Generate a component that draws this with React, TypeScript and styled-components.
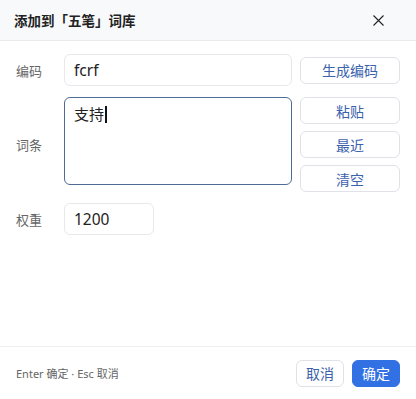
import React from "react";
import styled, { createGlobalStyle } from "styled-components";

const Global = createGlobalStyle`
  html, body { margin: 0; padding: 0; background: #ffffff; }
  body { font-family: "Noto Sans", "Noto Sans CJK SC", sans-serif; }
  * { box-sizing: border-box; }
`;

const Dialog = styled.div`
  width: 416px;
  height: 399px;
  display: flex;
  flex-direction: column;
  background: #ffffff;
`;

const Header = styled.div`
  height: 41px;
  flex: none;
  display: flex;
  align-items: center;
  justify-content: space-between;
  padding: 0 31px 0 14px;
  background: #f8f9fb;
  border-bottom: 1px solid #e8eaee;
`;

const Title = styled.div`
  font-family: "Noto Sans CJK SC", sans-serif;
  font-size: 13.5px;
  font-weight: 700;
  color: #222;
`;

const Close = styled.button`
  width: 14px;
  height: 14px;
  padding: 0;
  border: none;
  background: transparent;
  display: flex;
  align-items: center;
  justify-content: center;
`;

const Body = styled.div`
  flex: 1;
  padding: 13px 16px 0 16px;
  display: flex;
  flex-direction: column;
  gap: 11px;
`;

const Row = styled.div`
  display: grid;
  grid-template-columns: 40px 228px 100px;
  column-gap: 8px;
  align-items: center;
`;

const Label = styled.div`
  font-family: "Noto Sans CJK SC", sans-serif;
  font-size: 13px;
  color: #666;
`;

const Input = styled.div<{ $w?: number }>`
  width: ${(p) => (p.$w ? `${p.$w}px` : "100%")};
  height: 32px;
  border: 1px solid #e6e8ec;
  border-radius: 6px;
  padding: 0 9px;
  display: flex;
  align-items: center;
  font-size: 15.5px;
  color: #222;
`;

const TextArea = styled.div`
  align-self: start;
  height: 88px;
  border: 1px solid #4d6b94;
  border-radius: 6px;
  padding: 5px 9px;
  font-family: "Noto Sans CJK SC", sans-serif;
  font-size: 15px;
  color: #222;
  line-height: 22px;
`;

const Caret = styled.span`
  display: inline-block;
  width: 2px;
  height: 17px;
  background: #111;
  vertical-align: -3px;
  margin-left: 1px;
`;

const Btn = styled.button<{ $primary?: boolean }>`
  height: 27px;
  border-radius: 6px;
  font-family: "Noto Sans CJK SC", sans-serif;
  font-size: 14px;
  padding: 0;
  border: 1px solid ${(p) => (p.$primary ? "#3271e4" : "#dfe2e7")};
  background: ${(p) => (p.$primary ? "#3271e4" : "#ffffff")};
  color: ${(p) => (p.$primary ? "#ffffff" : "#3a62ad")};
`;

const SideButtons = styled.div`
  display: flex;
  flex-direction: column;
  gap: 7px;
`;

const Footer = styled.div`
  height: 53px;
  flex: none;
  border-top: 1px solid #eceef1;
  display: flex;
  align-items: center;
  justify-content: space-between;
  padding: 0 16px;
`;

const Hint = styled.div`
  font-family: "Noto Sans", "Noto Sans CJK SC", sans-serif;
  font-size: 11px;
  color: #666;
`;

const Actions = styled.div`
  display: flex;
  gap: 8px;
`;

const FooterBtn = styled(Btn)`
  width: 48px;
`;

export default function App() {
  return (
    <>
      <Global />
      <Dialog>
        <Header>
          <Title>添加到「五笔」词库</Title>
          <Close aria-label="close">
            <svg width="11" height="11" viewBox="0 0 11 11">
              <path d="M0.5 0.5 L10.5 10.5 M10.5 0.5 L0.5 10.5" stroke="#222" strokeWidth="1.1" />
            </svg>
          </Close>
        </Header>
        <Body>
          <Row>
            <Label>编码</Label>
            <Input>fcrf</Input>
            <Btn>生成编码</Btn>
          </Row>
          <Row>
            <Label>词条</Label>
            <TextArea>
              支持
              <Caret />
            </TextArea>
            <SideButtons>
              <Btn>粘贴</Btn>
              <Btn>最近</Btn>
              <Btn>清空</Btn>
            </SideButtons>
          </Row>
          <Row>
            <Label>权重</Label>
            <Input $w={90}>1200</Input>
          </Row>
        </Body>
        <Footer>
          <Hint>Enter 确定 · Esc 取消</Hint>
          <Actions>
            <FooterBtn>取消</FooterBtn>
            <FooterBtn $primary>确定</FooterBtn>
          </Actions>
        </Footer>
      </Dialog>
    </>
  );
}
